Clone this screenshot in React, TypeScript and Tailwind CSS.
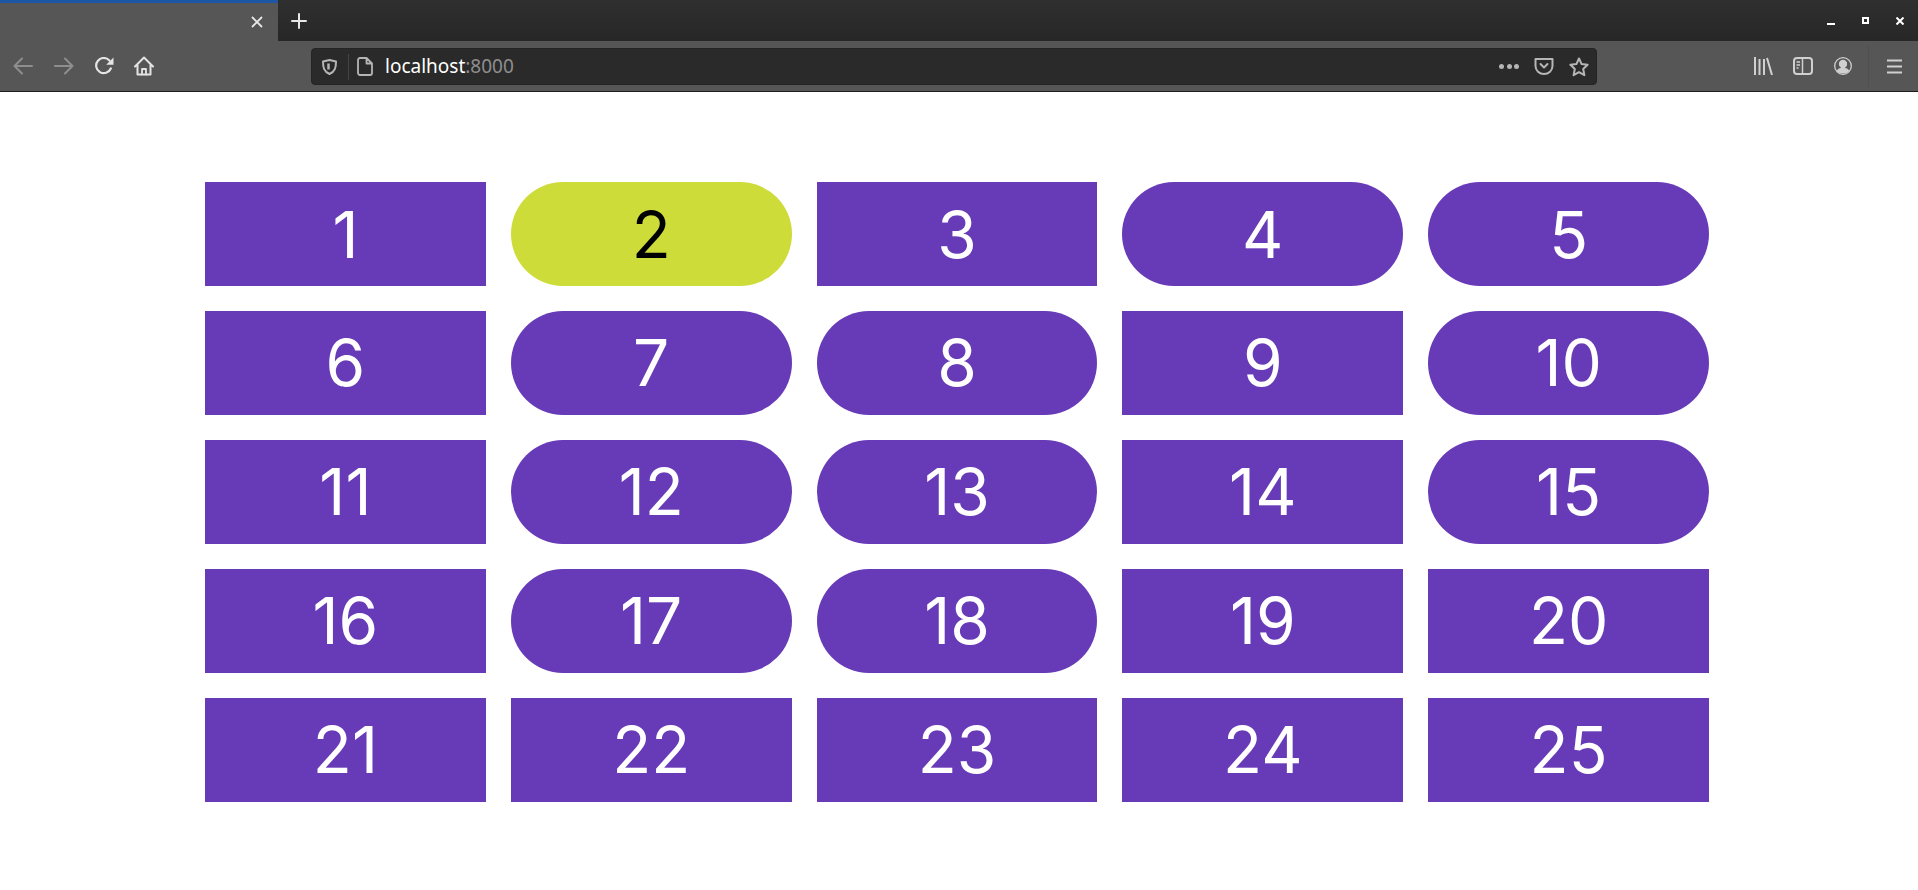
// which tiles are pills in the reference
const pills = [2, 4, 5, 7, 8, 10, 12, 13, 15, 17, 18];
const tiles = Array.from({ length: 25 }, (_, i) => i + 1);

const Back = () => (
  <svg width="20" height="18" viewBox="0 0 20 18" fill="none" stroke="#8e8e8e" strokeWidth="2" strokeLinecap="round" strokeLinejoin="round">
    <path d="M19 9H1.500M9 1.500L1.500 9 9 16.500" />
  </svg>
);

const Forward = () => (
  <svg width="20" height="18" viewBox="0 0 20 18" fill="none" stroke="#8e8e8e" strokeWidth="2" strokeLinecap="round" strokeLinejoin="round">
    <path d="M1 9h17.500M11 1.500L18.500 9 11 16.500" />
  </svg>
);

const Reload = () => (
  <svg width="19" height="18" viewBox="0 0 19 18" fill="none">
    <path d="M15.800 11.500A7.600 7.600 0 1 1 14.500 3.600" stroke="#e4e4e4" strokeWidth="2.200" strokeLinecap="round" />
    <path d="M18.500 0.500V7.800H11.200z" fill="#e4e4e4" />
  </svg>
);

const HomeIcon = () => (
  <svg width="20" height="20" viewBox="0 0 20 20" fill="none" stroke="#e4e4e4" strokeWidth="2" strokeLinecap="round" strokeLinejoin="round">
    <path d="M1 10.500L10 1.500l9 9M3.500 9v9.500h13V9" />
    <path d="M8 18.500v-5.500h4v5.500" strokeWidth="1.800" />
  </svg>
);

export default function App() {
  return (
    <div className="h-[890px] overflow-hidden bg-white font-['Inter',sans-serif]">
      {/* browser chrome */}
      <div className="flex h-[41px] items-center bg-gradient-to-b from-[#2f2f2f] to-[#272727]">
        <div className="flex h-full w-[278px] flex-col bg-[#565656]">
          <div className="h-[3px] bg-[#1c56a5]" />
          <div className="flex flex-1 items-center justify-end pr-[15px]">
            <svg width="12" height="12" viewBox="0 0 12 12" stroke="#e8e8e8" strokeWidth="1.800">
              <path d="M1 1l10 10M11 1L1 11" />
            </svg>
          </div>
        </div>
        <svg className="ml-[13px]" width="16" height="16" viewBox="0 0 16 16" stroke="#e8e8e8" strokeWidth="2" strokeLinecap="round">
          <path d="M8 1v14M1 8h14" />
        </svg>
        <div className="ml-auto flex items-center gap-[27px] pr-[14px]">
          <div className="mt-[7px] h-[2px] w-[8px] bg-white" />
          <div className="h-[7px] w-[7px] border-2 border-white" />
          <svg width="8" height="8" viewBox="0 0 8 8" stroke="#ffffff" strokeWidth="2">
            <path d="M0.500 0.500l7 7M7.500 0.500l-7 7" />
          </svg>
        </div>
      </div>
      <div className="flex h-[51px] items-center border-b border-[#1e1e1e] bg-[#565656] pl-[13px]">
        <Back />
        <div className="ml-[21px]">
          <Forward />
        </div>
        <div className="ml-[21px]">
          <Reload />
        </div>
        <div className="ml-[20px]">
          <HomeIcon />
        </div>
        <div className="ml-[157px] mt-px flex h-[37px] w-[1286px] items-center rounded-[4px] border border-[#242424] bg-[#2a2a2a] font-['Noto_Sans',sans-serif] text-[19px]">
          <svg className="ml-[10px]" width="15" height="16" viewBox="0 0 15 16" fill="none" stroke="#b5b5b5" strokeWidth="2" strokeLinejoin="round">
            <path d="M7.500 1L14 2.500c0 6-1 10-6.500 12.500C2 12.500 1 8.500 1 2.500z" />
            <path d="M6.500 4.500v6" strokeWidth="2.500" />
          </svg>
          <div className="ml-[11px] h-[26px] w-px bg-[#444]" />
          <svg className="ml-[8px]" width="16" height="19" viewBox="0 0 16 19" fill="none" stroke="#b5b5b5" strokeWidth="1.800" strokeLinejoin="round">
            <path d="M3 1h6.500L15 6.500V16a2 2 0 0 1-2 2H3a2 2 0 0 1-2-2V3a2 2 0 0 1 2-2zM9.500 1v5.500H15" />
          </svg>
          <span className="ml-[12px] text-white">
            localhost<span className="text-[#8e8e8e]">:8000</span>
          </span>
          <div className="ml-auto flex items-center gap-[15px] pr-[7px]">
            <div className="flex gap-[2.500px]">
              <div className="h-[5px] w-[5px] rounded-full bg-[#b5b5b5]" />
              <div className="h-[5px] w-[5px] rounded-full bg-[#b5b5b5]" />
              <div className="h-[5px] w-[5px] rounded-full bg-[#b5b5b5]" />
            </div>
            <svg width="20" height="17" viewBox="0 0 20 17" fill="none" stroke="#b5b5b5" strokeWidth="2" strokeLinecap="round" strokeLinejoin="round">
              <path d="M1.500 1h17v7a8.500 8 0 0 1-17 0zM6.500 6L10 9.500 13.500 6" />
            </svg>
            <svg width="20" height="20" viewBox="0 0 20 20" fill="none" stroke="#b5b5b5" strokeWidth="2" strokeLinejoin="round">
              <path d="M10 1.500l2.600 5.600 6 .7-4.400 4.200 1.200 6.200-5.400-3.100-5.400 3.100 1.200-6.200L1.400 7.800l6-.7z" />
            </svg>
          </div>
        </div>
        <div className="ml-auto flex items-center pr-[16px]">
          <svg width="19" height="18" viewBox="0 0 19 18" fill="none" stroke="#d0d0d0" strokeWidth="2">
            <path d="M1 0v18M5.500 2v16M10 2v16M13 1l5 17" />
          </svg>
          <svg className="ml-[20px]" width="20" height="18" viewBox="0 0 20 18" fill="none" stroke="#d0d0d0" strokeWidth="2">
            <rect x="1" y="1" width="18" height="16" rx="3" />
            <path d="M9.500 1v16M3.500 5h3.500M3.500 8h3.500M3.500 11h2" strokeWidth="1.500" />
          </svg>
          <svg className="ml-[21px]" width="18" height="18" viewBox="0 0 18 18" fill="none" stroke="#d0d0d0" strokeWidth="1.300">
            <circle cx="9" cy="9" r="8.300" />
            <circle cx="9" cy="7" r="3.500" fill="#d0d0d0" />
            <path d="M3.500 14c1-3.500 10-3.500 11 0c-3 2.500-8 2.500-11 0z" fill="#d0d0d0" />
          </svg>
          <div className="ml-[16px] h-[42px] w-px bg-[#4f4f4f]" />
          <svg className="ml-[18px]" width="15" height="15" viewBox="0 0 15 15" fill="none" stroke="#d0d0d0" strokeWidth="2.200">
            <path d="M0 1.500h15M0 7.500h15M0 13.500h15" />
          </svg>
        </div>
      </div>

      {/* tile grid */}
      <div className="grid grid-cols-[repeat(5,280.8px)] grid-rows-[repeat(5,104px)] gap-x-[25px] gap-y-[24.9px] pl-[205px] pt-[90px]">
        {tiles.map((n) => (
          <div
            key={n}
            className={`flex items-center justify-center pt-px text-[64px] ${n === 2 ? "bg-[#cddc39] text-black" : "bg-[#673ab7] text-white"} ${pills.includes(n) ? "rounded-[52px]" : ""}`}
          >
            {n}
          </div>
        ))}
      </div>
    </div>
  );
}
